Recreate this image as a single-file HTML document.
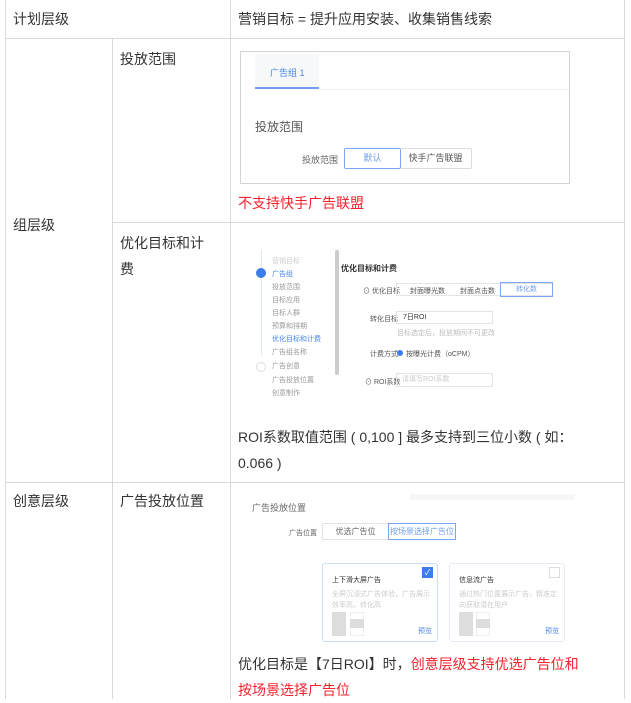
<!DOCTYPE html>
<html><head><meta charset="utf-8"><style>
*{margin:0;padding:0;box-sizing:border-box}
body{width:631px;height:699px;overflow:hidden;background:#fff;font-family:"Liberation Sans","Noto Sans CJK SC",sans-serif;color:#333;position:relative}
.a{position:absolute;white-space:nowrap}
.v{position:absolute;width:1px;background:#d9d9d9}
.h{position:absolute;height:1px;background:#d9d9d9}
.t{font-size:14px;line-height:26px}
.s{font-size:7px;color:#999}
.red{color:#f5222d}
.b{color:#4a86e8}
</style></head><body>
<div class="v" style="left:5px;top:0;height:699px"></div>
<div class="v" style="left:112px;top:38px;height:661px"></div>
<div class="v" style="left:230px;top:0;height:699px"></div>
<div class="v" style="left:624px;top:0;height:699px"></div>
<div class="h" style="left:5px;top:38px;width:620px"></div>
<div class="h" style="left:112px;top:222px;width:513px"></div>
<div class="h" style="left:5px;top:482px;width:620px"></div>

<div class="a t" style="left:13px;top:6px">计划层级</div>
<div class="a t" style="left:238px;top:6px">营销目标 = 提升应用安装、收集销售线索</div>
<div class="a t" style="left:13px;top:212px">组层级</div>
<div class="a t" style="left:120px;top:46px">投放范围</div>
<div class="a t" style="left:120px;top:230px;white-space:normal;width:100px">优化目标和计<br>费</div>
<div class="a t" style="left:13px;top:488px">创意层级</div>
<div class="a t" style="left:120px;top:488px">广告投放位置</div>

<!-- image 1 -->
<div class="a" style="left:240px;top:51px;width:330px;height:133px;border:1px solid #d4d4d4"></div>
<div class="a" style="left:255px;top:54px;width:64px;height:35px;background:#f6f8fa;border-bottom:2px solid #6f9ef0"></div>
<div class="h" style="left:319px;top:89px;width:250px;background:#eee"></div>
<div class="a b" style="left:270px;top:66px;font-size:9px">广告组 1</div>
<div class="a" style="left:255px;top:118px;font-size:12px;color:#555">投放范围</div>
<div class="a" style="left:302px;top:153px;font-size:9px;color:#666">投放范围</div>
<div class="a" style="left:344px;top:148px;width:57px;height:21px;border:1px solid #7aa7f0;border-radius:2px;font-size:9px;text-align:center;line-height:19px;color:#6f9ef0">默认</div>
<div class="a" style="left:400px;top:148px;width:72px;height:21px;border:1px solid #ddd;border-left:none;border-radius:0 2px 2px 0;font-size:9px;text-align:center;line-height:19px;color:#555">快手广告联盟</div>
<div class="a t red" style="left:238px;top:190px">不支持快手广告联盟</div>

<!-- image 2 -->
<div class="a" style="left:261px;top:250px;width:1px;height:105px;background:#dde6f5"></div>
<div class="a" style="left:256px;top:268px;width:10px;height:10px;border-radius:50%;background:#3b7de9"></div>
<div class="a" style="left:256px;top:362px;width:10px;height:10px;border-radius:50%;border:1px solid #ddd"></div>
<div class="a s" style="left:272px;top:256px;color:#ccc">营销目标</div>
<div class="a s b" style="left:272px;top:269px">广告组</div>
<div class="a s" style="left:272px;top:282px">投放范围</div>
<div class="a s" style="left:272px;top:295px">目标应用</div>
<div class="a s" style="left:272px;top:308px">目标人群</div>
<div class="a s" style="left:272px;top:321px">预算和排期</div>
<div class="a s b" style="left:272px;top:334px">优化目标和计费</div>
<div class="a s" style="left:272px;top:347px">广告组名称</div>
<div class="a s" style="left:272px;top:361px">广告创意</div>
<div class="a s" style="left:272px;top:375px">广告投放位置</div>
<div class="a s" style="left:272px;top:388px">创意制作</div>
<div class="a" style="left:335px;top:250px;width:4px;height:125px;background:#ccc;border-radius:2px"></div>
<div class="a" style="left:341px;top:263px;font-size:8px;color:#333;font-weight:bold">优化目标和计费</div>
<div class="a s" style="left:363px;top:286px;color:#555">⊙ 优化目标</div>
<div class="a" style="left:396px;top:283px;width:157px;height:13px;border:1px solid #e3e3e3"></div>
<div class="a s" style="left:410px;top:286px;color:#555">封面曝光数</div>
<div class="a s" style="left:460px;top:286px;color:#555">封面点击数</div>
<div class="a" style="left:500px;top:282px;width:53px;height:15px;border:1px solid #7aa7f0;font-size:7px;color:#6f9ef0;text-align:center;line-height:13px">转化数</div>
<div class="a s" style="left:370px;top:314px;color:#555">转化目标</div>
<div class="a" style="left:396px;top:311px;width:97px;height:13px;border:1px solid #e3e3e3;font-size:7px;padding-left:6px;line-height:11px;color:#333">7日ROI</div>
<div class="a s" style="left:397px;top:328px;color:#bbb">目标选定后，投放期间不可更改</div>
<div class="a s" style="left:370px;top:349px;color:#555">计费方式</div>
<div class="a" style="left:397px;top:350px;width:6px;height:6px;border-radius:50%;background:#3b7de9"></div>
<div class="a s" style="left:406px;top:349px;color:#555">按曝光计费（oCPM）</div>
<div class="a s" style="left:365px;top:377px;color:#555">⊙ ROI系数</div>
<div class="a" style="left:396px;top:373px;width:97px;height:14px;border:1px solid #e3e3e3;font-size:7px;padding-left:5px;line-height:12px;color:#ccc">请填写ROI系数</div>
<div class="a t" style="left:238px;top:424px">ROI系数取值范围 ( 0,100 ] 最多支持到三位小数 ( 如：</div>
<div class="a t" style="left:238px;top:450px">0.066 )</div>

<!-- image 3 -->
<div class="a" style="left:410px;top:494px;width:165px;height:6px;background:#f7f7f7"></div>
<div class="a" style="left:252px;top:501px;font-size:9px;color:#666">广告投放位置</div>
<div class="a s" style="left:289px;top:528px;color:#666">广告位置</div>
<div class="a" style="left:322px;top:523px;width:67px;height:17px;border:1px solid #e3e3e3;font-size:8px;text-align:center;line-height:15px;color:#666">优选广告位</div>
<div class="a" style="left:388px;top:523px;width:68px;height:17px;border:1px solid #7aa7f0;font-size:8px;text-align:center;line-height:15px;color:#6f9ef0">按场景选择广告位</div>
<div class="a" style="left:322px;top:563px;width:116px;height:79px;border:1px solid #c9dcfa;border-radius:3px"></div>
<div class="a" style="left:449px;top:563px;width:116px;height:79px;border:1px solid #e6ecf5;border-radius:3px"></div>
<div class="a" style="left:422px;top:567px;width:11px;height:11px;background:#3b7de9;color:#fff;font-size:8px;line-height:11px;text-align:center">✓</div>
<div class="a" style="left:549px;top:567px;width:11px;height:11px;border:1px solid #ddd"></div>
<div class="a" style="left:332px;top:575px;font-size:7px;color:#333">上下滑大屏广告</div>
<div class="a" style="left:459px;top:575px;font-size:7px;color:#333">信息流广告</div>
<div class="a s" style="left:332px;top:589px;color:#ccc;line-height:11px;white-space:normal;width:100px">全屏沉浸式广告体验，广告展示效率高，转化高</div>
<div class="a s" style="left:459px;top:589px;color:#ccc;line-height:11px;white-space:normal;width:100px">通过热门位置展示广告，精准定向获取潜在用户</div>
<div class="a" style="left:332px;top:612px;width:14px;height:24px;background:#ddd"></div>
<div class="a" style="left:350px;top:612px;width:14px;height:24px;border:1px solid #eee"></div>
<div class="a" style="left:350px;top:619px;width:14px;height:9px;background:#ddd"></div>
<div class="a" style="left:459px;top:612px;width:14px;height:24px;background:#ddd"></div>
<div class="a" style="left:476px;top:612px;width:14px;height:24px;border:1px solid #eee"></div>
<div class="a" style="left:476px;top:619px;width:14px;height:9px;background:#ddd"></div>
<div class="a b" style="left:418px;top:626px;font-size:7px">预览</div>
<div class="a b" style="left:545px;top:626px;font-size:7px">预览</div>
<div class="a t" style="left:238px;top:651px">优化目标是【7日ROI】时，<span class="red">创意层级支持优选广告位和</span></div>
<div class="a t red" style="left:238px;top:677px">按场景选择广告位</div>
</body></html>
